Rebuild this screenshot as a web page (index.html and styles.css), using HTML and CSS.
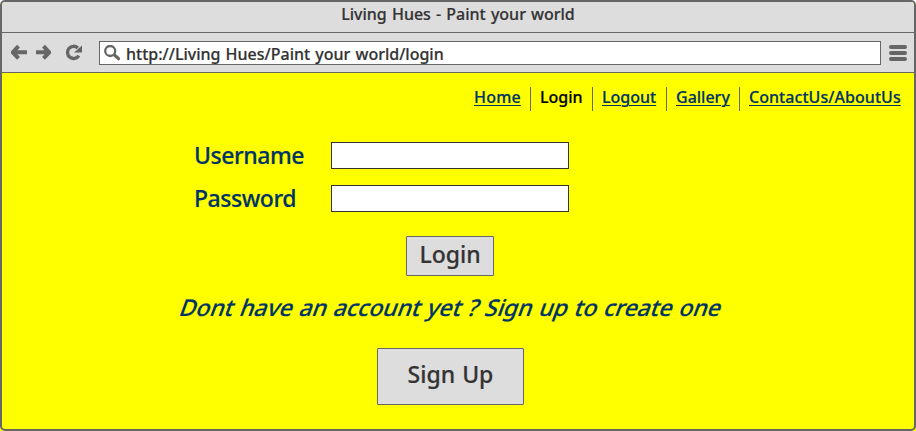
FILE: index.html
```html
<!DOCTYPE html>
<html lang="en">
<head>
<meta charset="utf-8">
<title>Living Hues - Paint your world</title>
<link rel="stylesheet" href="styles.css">
</head>
<body>
<div class="window">
  <header class="titlebar"><span class="title">Living Hues - Paint your world</span></header>
  <div class="toolbar">
    <svg class="controls" width="76" height="20" viewBox="0 0 76 20" fill="none" stroke="#666" stroke-width="4">
      <path stroke-linejoin="round" d="M9.500 3.200 3.800 9.300 9.500 15.400M3.800 9.300H18"/>
      <path stroke-linejoin="round" d="M34.500 3.200 40.200 9.300 34.500 15.400M40.200 9.300H27"/>
      <path stroke-width="3.400" d="M69.800 12.600A6.100 6.100 0 1 1 68.800 5"/>
      <path fill="#666" stroke="none" d="M73 2.500V9.500H65Z"/>
    </svg>
    <div class="address">
      <svg class="search" width="18" height="18" viewBox="0 0 18 18" fill="none" stroke="#666">
        <circle cx="6.200" cy="6" r="5" stroke-width="2.300"/>
        <path d="M10.500 10 14.500 13.700" stroke-width="3.200" stroke-linecap="round"/>
      </svg>
      <span class="url">http://Living Hues/Paint your world/login</span>
    </div>
    <div class="menu"><i></i><i></i><i></i></div>
  </div>
  <main class="page">
    <nav class="nav">
      <a class="home">Home</a><a class="current">Login</a><a class="logout">Logout</a><a class="gallery">Gallery</a><a class="contact">ContactUs/AboutUs</a>
    </nav>
    <form class="form">
      <label for="user"><span class="username">Username</span></label><input id="user" type="text">
      <label for="pass"><span class="password">Password</span></label><input id="pass" type="password">
    </form>
    <button class="login"><span>Login</span></button>
    <p class="prompt"><span>Dont have an account yet ? Sign up to create one</span></p>
    <button class="signup"><span>Sign Up</span></button>
  </main>
</div>
</body>
</html>
```
FILE: styles.css
```css
* { box-sizing: border-box; }
body { margin: 0; background: linear-gradient(#fff 50%, #ff0 50%); font-family: "Noto Sans", "Open Sans", sans-serif; font-weight: 500; font-size: 16px; color: #333; -webkit-text-stroke: .2px currentColor; }
span, .nav a { white-space: nowrap; }
.window { width: 916px; height: 431px; border: 2px solid #666; border-radius: 5px; overflow: hidden; background: #ff0; }
.titlebar { height: 31px; background: #ddd; border-bottom: 1px solid #666; text-align: center; line-height: 24px; word-spacing: 1px; }
.toolbar { height: 40px; background: #ddd; border-bottom: 1px solid #666; display: flex; padding: 8px 7px 0 7px; }
.controls { flex: none; margin-top: 2px; }
.address { width: 782px; height: 24px; margin-left: 14px; flex: none; background: #fff; border: 1px solid #666; display: flex; padding-left: 4px; line-height: 24px; }
.url { word-spacing: 1px; }
.search { margin: 3px 4px 0 0; flex: none; }
.menu { margin: 4px 0 0 8px; width: 18px; display: flex; flex-direction: column; gap: 2px; }
.menu i { height: 4px; background: #666; border-radius: 2px; }
.page { display: flex; flex-direction: column; }
.nav { display: flex; justify-content: flex-end; margin: 14px 13px 0 0; height: 24px; line-height: 20px; color: #003366; }
.nav a { padding-left: 9px; border-left: 1px solid #666; text-decoration: underline; text-decoration-thickness: 1px; text-underline-offset: 2px; }
.nav .home { border: 0; padding: 0; width: 56px; letter-spacing: .2px; }
.nav .current { width: 62px; color: #000; text-decoration: none; }
.nav .logout { width: 74px; }
.nav .gallery { width: 73px; }
.nav .contact { width: 162px; letter-spacing: .05px; }
.form { display: grid; grid-template-columns: 137px 238px; grid-template-rows: 27px 27px; row-gap: 16px; margin: 31px 0 0 192px; font-size: 23px; line-height: 27px; letter-spacing: -.45px; color: #003366; }
input { width: 238px; height: 27px; border: 1px solid #333; background: #fff; padding: 0 4px; outline: 0; }
button { background: #ddd; border: 1px solid #666; border-radius: 1px; padding: 0; font: inherit; font-size: 23px; color: #333; }
.login { width: 88px; height: 40px; margin: 24px 0 0 404px; line-height: 34px; padding-bottom: 4px; }
.prompt { margin: 16px 0 0 179px; height: 32px; line-height: 30px; font-size: 23px; letter-spacing: -.1px; word-spacing: 1px; color: #003366; }
.prompt span { display: inline-block; transform: skewX(-20deg); }
.signup { width: 147px; height: 57px; margin: 24px 0 0 375px; line-height: 50px; padding-bottom: 5px; word-spacing: 1px; }
```
